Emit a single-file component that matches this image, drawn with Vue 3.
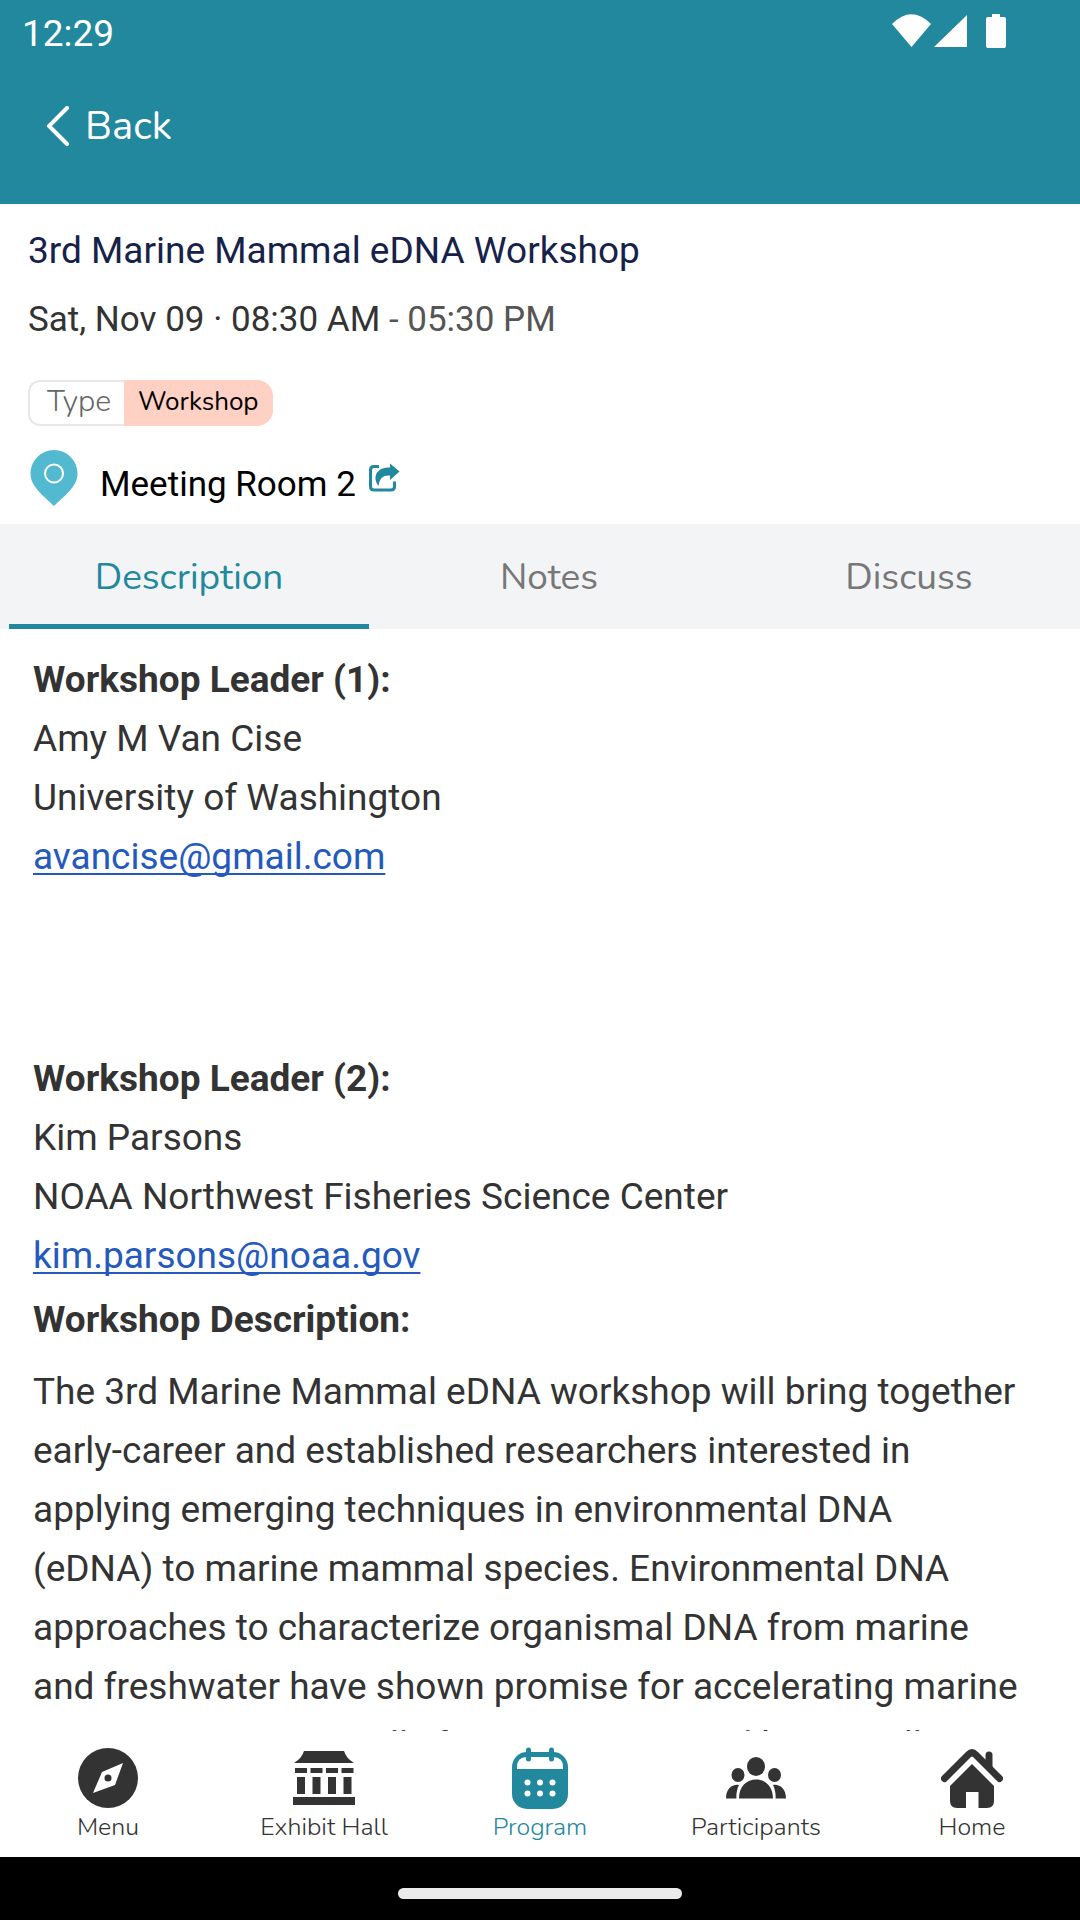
<script setup>
const tabs = ['Description', 'Notes', 'Discuss']
</script>

<template>
  <div class="app">
    <header class="top">
      <div class="status">
        <span class="time">12:29</span>
        <svg class="signals" viewBox="0 0 116 36" aria-hidden="true">
          <path d="M0 11Q19.500-8.500 39 11L19.500 34Z" />
          <path d="M42 34L75 2V34Z" />
          <path d="M100 1h8v3h4q2 0 2 2v27q0 2-2 2h-16q-2 0-2-2V6q0-2 2-2h4z" />
        </svg>
      </div>
      <button class="back" type="button">
        <svg viewBox="0 0 22 40" aria-hidden="true"><path d="M20 2L2 20L20 38" /></svg>
        <span>Back</span>
      </button>
    </header>

    <section class="summary">
      <h1>3rd Marine Mammal eDNA Workshop</h1>
      <p class="when">Sat, Nov 09 · 08:30 AM <span>- 05:30 PM</span></p>
      <div class="tag"><span class="key">Type</span><span class="value">Workshop</span></div>
      <div class="place">
        <svg class="pin" viewBox="0 0 48 56" aria-hidden="true">
          <path d="M24 0A23.500 23.500 0 0 1 47.500 23.500C47.500 37 34 46 24 56C14 46 .5 37 .5 23.500A23.500 23.500 0 0 1 24 0Z" />
          <circle cx="24" cy="23.500" r="9" />
        </svg>
        <a href="#room">Meeting Room 2
          <svg class="share" viewBox="0 0 31 29" aria-hidden="true">
            <path class="box" d="M10 3.500H5Q1.500 3.500 1.500 7v16.500Q1.500 27 5 27h17q3.500 0 3.500-3.500v-5" />
            <path d="M21 .5L30.500 8.500L21 17V12.500C14 12 10.500 15 9.500 23C6.500 19 5.500 14.500 7.500 10.500C10 6 14.500 4.500 21 4.500Z" />
          </svg>
        </a>
      </div>
    </section>

    <nav class="tabs">
      <button v-for="(tab, i) in tabs" :key="tab" type="button" :class="{ active: i === 0 }">{{ tab }}</button>
    </nav>

    <main class="body">
      <p><strong>Workshop Leader (1):</strong><br />Amy M Van Cise<br />University of Washington<br /><a href="mailto:avancise@gmail.com">avancise@gmail.com</a></p>
      <p class="second"><strong>Workshop Leader (2):</strong><br />Kim Parsons<br />NOAA Northwest Fisheries Science Center<br /><a href="mailto:kim.parsons@noaa.gov">kim.parsons@noaa.gov</a></p>
      <h2>Workshop Description:</h2>
      <p class="text">The 3rd Marine Mammal eDNA workshop will bring together early-career and established researchers interested in applying emerging techniques in environmental DNA (eDNA) to marine mammal species. Environmental DNA approaches to characterize organismal DNA from marine and freshwater have shown promise for accelerating marine conservation, especially for rare, cryptic and historically</p>
    </main>

    <footer>
      <nav class="bottom">
        <a href="#menu">
          <svg viewBox="0 0 62 62" aria-hidden="true">
            <circle cx="31" cy="31" r="30" />
            <path class="hole" d="M46 16L38 38L16 46L25 25Z" />
            <circle cx="31" cy="31" r="3.500" />
          </svg>
          <span>Menu</span>
        </a>
        <a href="#exhibits">
          <svg viewBox="0 0 62 62" aria-hidden="true">
            <path d="M11 4H51Q53 11 61 16H1Q9 11 11 4ZM2 21H14V26H2ZM17.500 21H29.500V26H17.500ZM33 21H45V26H33ZM48.500 21H60.500V26H48.500ZM4 30H12V47H4ZM19.500 30H27.500V47H19.500ZM35 30H43V47H35ZM50.500 30H58.500V47H50.500ZM0 50H62V58H0Z" />
          </svg>
          <span>Exhibit Hall</span>
        </a>
        <a href="#program" class="current">
          <svg viewBox="0 0 62 62" aria-hidden="true">
            <rect x="3" y="5" width="56" height="57" rx="15" />
            <path class="hole" d="M8 22V20Q8 10 18 10H44Q54 10 54 20V22Z" />
            <path class="ring" d="M19.500 3V12M42.500 3V12" />
            <g class="hole">
              <circle cx="18.500" cy="35.500" r="3" /><circle cx="31" cy="35.500" r="3" /><circle cx="43.500" cy="35.500" r="3" />
              <circle cx="18.500" cy="46.500" r="3" /><circle cx="31" cy="46.500" r="3" /><circle cx="43.500" cy="46.500" r="3" />
            </g>
          </svg>
          <span>Program</span>
        </a>
        <a href="#participants">
          <svg viewBox="0 0 62 62" aria-hidden="true">
            <ellipse cx="31" cy="19.500" rx="9" ry="9.500" />
            <ellipse cx="13" cy="28" rx="6.500" ry="7" /><ellipse cx="49.500" cy="28" rx="6.500" ry="7" />
            <path d="M14 51.500C14 39 22 32.500 31 32.500S48 39 48 51.500ZM1 51.500C1 42 7 37 14 38C12 42 11 47 11.500 51.500ZM61 51.500C61 42 55 37 48 38C50 42 51 47 50.500 51.500Z" />
          </svg>
          <span>Participants</span>
        </a>
        <a href="#home">
          <svg viewBox="0 0 62 62" aria-hidden="true">
            <path class="roof" d="M3.500 31.500L27.500 7.500Q31 4 34.500 7.500L58.500 31.500" />
            <path class="roof" d="M48 8V20" />
            <path d="M31 17L53 39V54Q53 61 46 61H37.500V45H25V61H16Q9 61 9 54V39Z" />
          </svg>
          <span>Home</span>
        </a>
      </nav>
      <div class="gesture"><i></i></div>
    </footer>
  </div>
</template>

<style>
body { margin: 0; }
</style>

<style scoped>
.app {
  display: flex;
  flex-direction: column;
  height: 100vh;
  overflow: hidden;
  background: #fff;
  color: #333;
  font-family: Roboto, sans-serif;
  font-size: 37px;
}
p, h1, h2 { margin: 0; }
button { border: 0; padding: 0; background: none; font: inherit; color: inherit; }
.top { flex: none; height: 204px; background: #22889e; color: #fff; }
.status { display: flex; justify-content: space-between; align-items: center; height: 66px; padding: 0 72px 0 22px; }
.signals { width: 116px; height: 36px; fill: #fff; margin-bottom: 4px; }
.back { display: flex; align-items: center; gap: 16px; margin: 36px 0 0 47px; height: 48px; font-family: Nunito, Lato, sans-serif; font-size: 40px; }
.back svg { width: 22px; height: 40px; fill: none; stroke: #fff; stroke-width: 4; stroke-linecap: round; }
.summary { flex: none; box-sizing: border-box; height: 320px; padding: 22px 28px 0; }
h1 { font-size: 37px; font-weight: 400; line-height: 50px; color: #17224a; }
.when { margin-top: 19px; font-size: 35px; line-height: 50px; }
.when span { color: #555; }
.tag { display: flex; width: max-content; margin-top: 35px; font-family: Nunito, Lato, sans-serif; line-height: 40px; }
.key { border: 2px solid #e8e8e8; border-radius: 12px 0 0 12px; border-right: 0; padding: 0 13px 0 17px; font-size: 30px; font-weight: 300; color: #666; height: 42px; }
.value { border-radius: 0 16px 16px 0; padding: 2px 14px 4px; background: #ffd0c4; font-size: 26px; color: #000; }
.place { display: flex; align-items: flex-start; gap: 22px; margin-top: 24px; padding-left: 2px; }
.pin { width: 48px; height: 56px; fill: #52b9d1; }
.pin circle { fill: none; stroke: #fff; stroke-width: 2; }
.place a { color: #000; text-decoration: none; font-size: 35px; line-height: 50px; margin-top: 10px; }
.share { width: 31px; height: 29px; margin-left: 4px; fill: #22889e; vertical-align: 4px; }
.share .box { fill: none; stroke: #22889e; stroke-width: 3; }
.tabs { flex: none; display: flex; overflow: hidden; height: 105px; padding-left: 9px; background: #f3f4f6; }
.tabs button { flex: none; width: calc(100vw / 3); padding-top: 5px; border-bottom: 5px solid transparent; font-family: Nunito, Lato, sans-serif; font-size: 37px; color: #777; }
.tabs .active { border-color: #22889e; color: #22889e; }
.body { flex: 1; min-height: 0; overflow: hidden; padding: 21px 61px 0 33px; line-height: 59px; }
.body a { color: #2459bd; text-underline-offset: 4px; text-decoration-thickness: 2px; text-decoration-skip-ink: none; }
.second { margin-top: 163px; }
h2 { margin-top: 5px; font-size: 37px; line-height: 59px; }
.text { margin-top: 13px; }
footer { flex: none; }
.bottom { display: grid; grid-template-columns: repeat(5, 1fr); box-sizing: border-box; height: 126px; padding-top: 16px; background: #fff; }
.bottom a { display: flex; flex-direction: column; align-items: center; gap: 2px; color: #333; text-decoration: none; font-family: Nunito, Lato, sans-serif; font-size: 25px; font-weight: 300; line-height: 32px; }
.bottom svg { width: 62px; height: 62px; fill: currentColor; }
.bottom .hole { fill: #fff; }
.bottom .current { color: #22889e; }
.bottom .ring, .bottom .roof { stroke: currentColor; stroke-width: 5; stroke-linecap: round; fill: none; }
.bottom .roof { stroke-width: 7; }
.gesture { display: flex; justify-content: center; align-items: center; height: 63px; background: #000; }
.gesture i { width: 284px; height: 11px; margin-top: 10px; border-radius: 6px; background: #ebebeb; }
</style>
